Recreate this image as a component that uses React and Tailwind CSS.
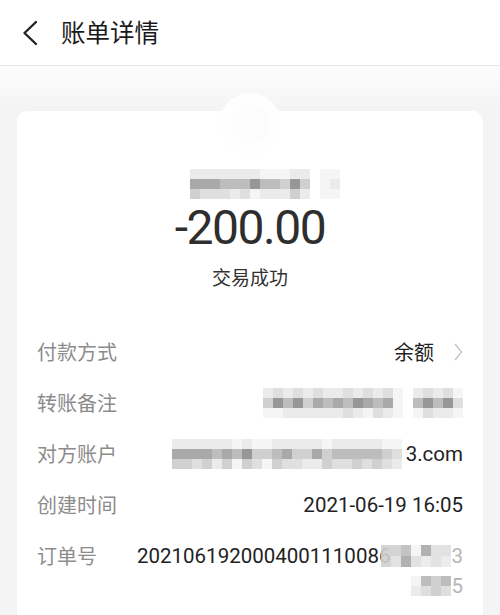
import React from "react";

const CN = "font-['Noto_Sans_CJK_SC',sans-serif]";
const NUM = "font-['Roboto','Noto_Sans_CJK_SC',sans-serif]";

// mosaic shades, blurred-out private info
const SHADE = {
  w: "bg-transparent",
  0: "bg-[#f5f5f5]",
  1: "bg-[#ebebeb]",
  2: "bg-[#dfdfdf]",
  3: "bg-[#d0d0d0]",
  4: "bg-[#bdbdbd]",
  5: "bg-[#a9a9a9]",
  6: "bg-[#979797]",
};

const Mosaic = ({ rows, cell = "w-[10px] h-[10px]", className = "" }) => (
  <span className={`inline-flex flex-col align-middle ${className}`}>
    {rows.map((row, i) => (
      <span key={i} className="flex">
        {row.split("").map((c, j) => (
          <span key={j} className={`${cell} ${SHADE[c]}`} />
        ))}
      </span>
    ))}
  </span>
);

const Row = ({ label, children, top = false }) => (
  <div className={`flex justify-between py-[10.5px] leading-[30px] ${top ? "items-start" : "items-center"}`}>
    <span className={`${CN} text-[20px] text-[#8c8c8c] shrink-0`}>{label}</span>
    {children}
  </div>
);

export default function App() {
  return (
    <div className="w-[500px] h-[615px] overflow-hidden bg-[#f4f4f4]">
      {/* HEADER */}
      <div className="h-[66px] bg-white border-b border-[#e6e6e6] flex items-center">
        <svg width="18" height="26" viewBox="0 0 18 26" className="ml-[21px]">
          <path d="M15 2 L3.5 13 L15 24" fill="none" stroke="#222" strokeWidth="2.4" strokeLinecap="round" strokeLinejoin="round" />
        </svg>
        <h1 className={`${CN} ml-[22px] text-[24.5px] text-[#1a1a1a] leading-none`}>账单详情</h1>
      </div>

      <div className="bg-[linear-gradient(to_bottom,#fdfdfd_0px,#f4f4f4_42px)] px-[17px] pt-[45px]">
        {/* CARD */}
        <div className="relative bg-white rounded-[10px] px-[20px] pt-[58px] pb-[40px]">
          <div className="absolute -top-[18px] left-1/2 -translate-x-1/2 w-[62px] h-[62px] rounded-full bg-[#fefefe] flex items-center justify-center">
            <div className="w-[36px] h-[40px] rounded-full bg-[#fcfcfc]" />
          </div>

          <div className="flex justify-center pl-[30px]">
            <Mosaic rows={["111111100011w00", "555444644363w01", "322212011131w00"]} />
          </div>

          <div className={`${NUM} mt-[5px] text-center text-[48px] leading-[48px] tracking-[-1.5px] text-[#2e2e2e]`}>-200.00</div>
          <div className={`${CN} mt-[12px] text-center text-[19px] leading-[26px] text-[#333]`}>交易成功</div>

          <div className="mt-[36px]">
            <Row label="付款方式">
              <span className="flex items-center">
                <span className={`${CN} text-[20px] text-[#222]`}>余额</span>
                <svg width="9" height="18" viewBox="0 0 9 18" className="ml-[20px]">
                  <path d="M1 1 L7.5 9 L1 17" fill="none" stroke="#c4c4c4" strokeWidth="1.4" />
                </svg>
              </span>
            </Row>
            <Row label="转账备注">
              <span className="flex items-center gap-[10px]">
                <Mosaic rows={["12121211212120", "36463545465450", "00111111210210"]} />
                <Mosaic rows={["12120", "46462", "02110"]} />
              </span>
            </Row>
            <Row label="对方账户">
              <span className="flex items-center">
                <Mosaic rows={["11111101001111101111100", "55554546334533534444432", "33231303203221132232321"]} />
                <span className={`${NUM} text-[20.5px] text-[#222] ml-[4px]`}>3.com</span>
              </span>
            </Row>
            <Row label="创建时间">
              <span className={`${NUM} text-[20.5px] text-[#222]`}>2021-06-19 16:05</span>
            </Row>
            <Row label="订单号" top>
              <span className="flex flex-col items-end">
                <span className={`${NUM} flex items-center text-[20.5px] text-[#222]`}>
                  <span>20210619200040011100</span>
                  <span>86</span>
                  <Mosaic rows={["3340522", "3252121"]} cell="w-[10px] h-[11px]" className="relative -ml-[9px] opacity-90" />
                  <span className="text-[#b5b5b5]">3</span>
                </span>
                <span className={`${NUM} flex items-center text-[20.5px]`}>
                  <Mosaic rows={["0434", "1232"]} cell="w-[10px] h-[10px]" />
                  <span className="text-[#b5b5b5]">5</span>
                </span>
              </span>
            </Row>
          </div>
        </div>
      </div>
    </div>
  );
}
